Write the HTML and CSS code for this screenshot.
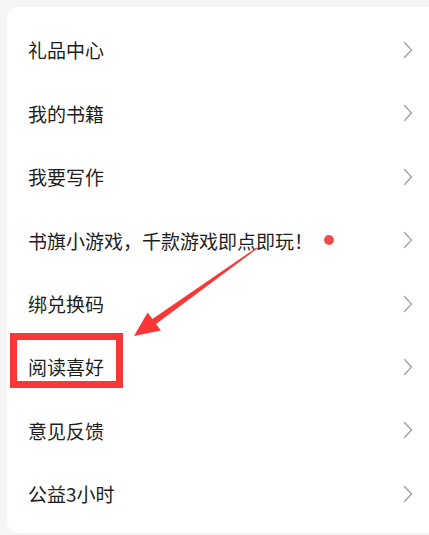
FILE: index.html
```html
<!DOCTYPE html>
<html lang="zh-CN">
<head>
<meta charset="utf-8">
<title>菜单</title>
<link rel="stylesheet" href="styles.css">
</head>
<body>
<div class="card">
  <div class="row"><span class="label">礼品中心</span><svg class="chev" viewBox="0 0 10 18"><path d="M1.5 1.5 L8.5 9 L1.5 16.5"/></svg></div>
  <div class="row"><span class="label">我的书籍</span><svg class="chev" viewBox="0 0 10 18"><path d="M1.5 1.5 L8.5 9 L1.5 16.5"/></svg></div>
  <div class="row"><span class="label">我要写作</span><svg class="chev" viewBox="0 0 10 18"><path d="M1.5 1.5 L8.5 9 L1.5 16.5"/></svg></div>
  <div class="row"><span class="label">书旗小游戏，千款游戏即点即玩！</span><span class="dot"></span><svg class="chev" viewBox="0 0 10 18"><path d="M1.5 1.5 L8.5 9 L1.5 16.5"/></svg></div>
  <div class="row"><span class="label">绑兑换码</span><svg class="chev" viewBox="0 0 10 18"><path d="M1.5 1.5 L8.5 9 L1.5 16.5"/></svg></div>
  <div class="row highlighted"><span class="label">阅读喜好</span><span class="mark"></span><svg class="chev" viewBox="0 0 10 18"><path d="M1.5 1.5 L8.5 9 L1.5 16.5"/></svg></div>
  <div class="row"><span class="label">意见反馈</span><svg class="chev" viewBox="0 0 10 18"><path d="M1.5 1.5 L8.5 9 L1.5 16.5"/></svg></div>
  <div class="row"><span class="label">公益3小时</span><svg class="chev" viewBox="0 0 10 18"><path d="M1.5 1.5 L8.5 9 L1.5 16.5"/></svg></div>
</div>
<svg class="arrow" viewBox="0 0 429 535" width="429" height="535">
  <polygon points="257.4,248.5 256.6,247.5 152.4,319 147.6,312.6 134,336 160.8,330.4 156,324"/>
</svg>
</body>
</html>
```

FILE: styles.css
```css
html, body {
  margin: 0;
  padding: 0;
}
body {
  background: #f5f5f5;
  width: 429px;
  height: 535px;
  overflow: hidden;
  position: relative;
  font-family: "Noto Sans CJK SC", "Noto Sans", sans-serif;
}
.card {
  margin: 7px 0 0 7px;
  background: #ffffff;
  border-radius: 12px 0 0 12px;
  padding: 11.3px 0 7.5px 0;
  display: flex;
  flex-direction: column;
}
.row {
  height: 63.4px;
  display: flex;
  align-items: center;
  padding: 0 16px 0 21px;
  position: relative;
}
.label {
  font-size: 19px;
  font-weight: 400;
  color: #1e1e1e;
  line-height: 1;
  white-space: nowrap;
}
.dot {
  width: 10px;
  height: 10px;
  border-radius: 50%;
  background: #f24d4d;
  margin-left: 11px;
}
.chev {
  width: 10px;
  height: 18px;
  margin-left: auto;
  flex: none;
}
.chev path {
  fill: none;
  stroke: #a2a5ac;
  stroke-width: 1.5;
  stroke-linecap: round;
  stroke-linejoin: round;
}
.mark {
  position: absolute;
  left: 3px;
  top: -2px;
  width: 113px;
  height: 55px;
  box-sizing: border-box;
  border: 7px solid #fa3636;
}
.arrow {
  position: absolute;
  left: 0;
  top: 0;
  pointer-events: none;
}
.arrow polygon {
  fill: #fa3636;
}
```
